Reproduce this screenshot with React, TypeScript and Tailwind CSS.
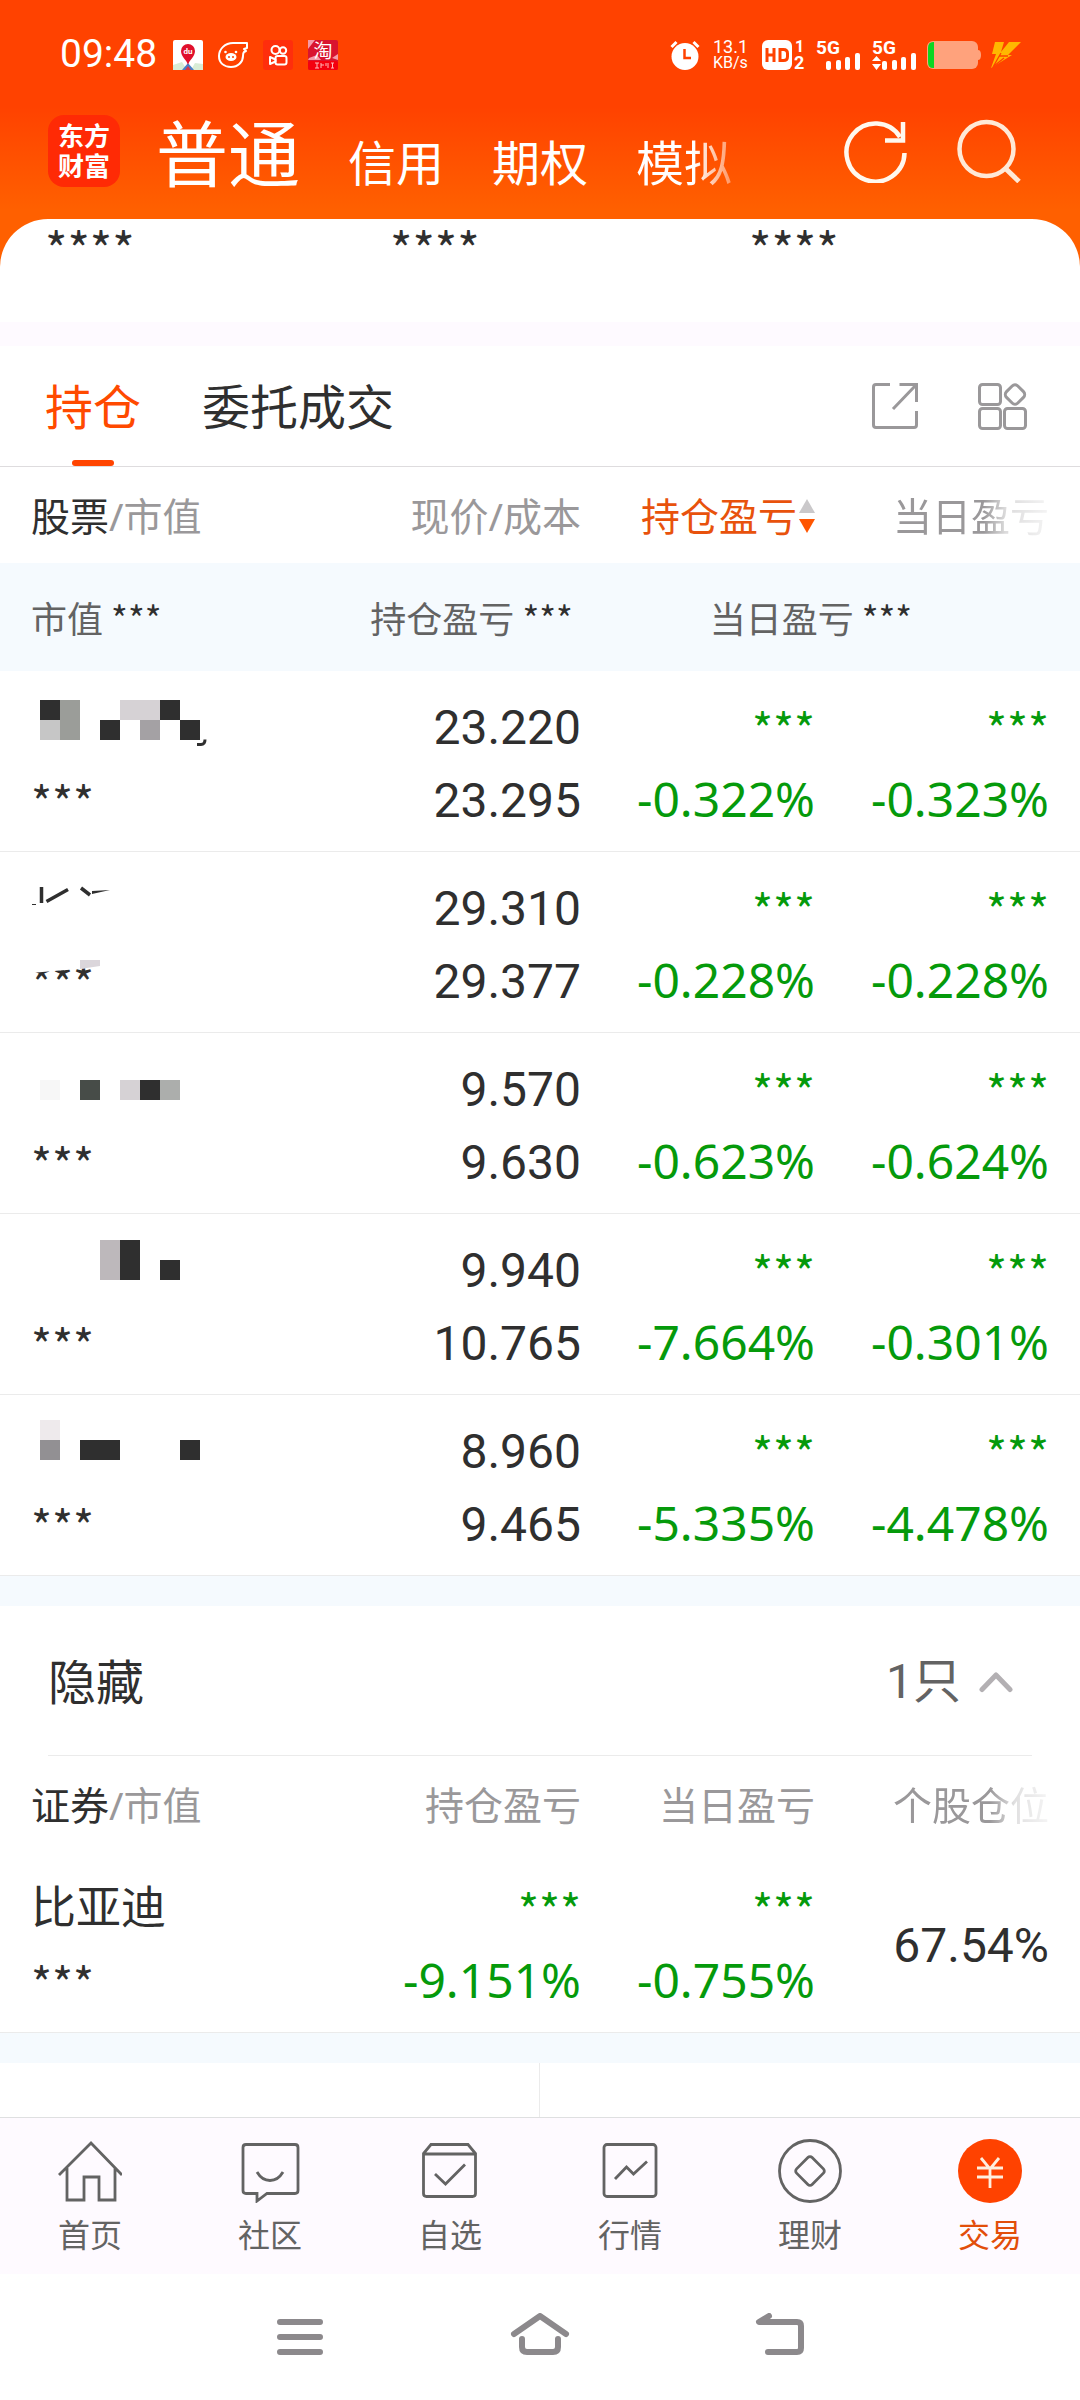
import type { ReactNode } from "react";

type Block = [x: number, y: number, w: number, h: number, fill: string];

type Holding = {
  id: string;
  blocks?: Block[];
  fragment?: ReactNode;
  veiled?: boolean;
  price: string;
  cost: string;
  total: string;
  day: string;
};

const INK = "#2f2f2f";

const holdings: Holding[] = [
  {
    id: "a",
    blocks: [
      [9, 11, 20, 20, INK],
      [9, 31, 20, 20, "#c6c6c6"],
      [29, 11, 20, 40, "#9b9d99"],
      [69, 31, 20, 20, INK],
      [89, 11, 40, 20, "#d6d2d5"],
      [109, 31, 20, 20, "#a4a1a4"],
      [129, 11, 20, 20, INK],
      [149, 31, 20, 20, INK],
    ],
    fragment: <path d="M166 55.5h4q4 0 4-5" fill="none" stroke={INK} strokeWidth="3" />,
    price: "23.220",
    cost: "23.295",
    total: "-0.322%",
    day: "-0.323%",
  },
  {
    id: "b",
    fragment: (
      <g fill="none" stroke={INK} strokeWidth="3.5">
        <path d="M10.500 17v16M15.500 31.500L37 19.500M50 18l9 7" />
        <path d="M61 21l18 -1l-18 4z" fill={INK} stroke="none" />
        <path d="M1 34.500h4" strokeWidth="1" />
      </g>
    ),
    veiled: true,
    price: "29.310",
    cost: "29.377",
    total: "-0.228%",
    day: "-0.228%",
  },
  {
    id: "c",
    blocks: [
      [9, 29, 20, 20, "#f7f7f7"],
      [49, 29, 20, 20, "#474c48"],
      [89, 29, 20, 20, "#d6d2d5"],
      [109, 29, 20, 20, INK],
      [129, 29, 20, 20, "#acaeac"],
    ],
    price: "9.570",
    cost: "9.630",
    total: "-0.623%",
    day: "-0.624%",
  },
  {
    id: "d",
    blocks: [
      [69, 8, 20, 40, "#bdb8bb"],
      [89, 8, 20, 40, INK],
      [129, 28, 20, 20, INK],
    ],
    price: "9.940",
    cost: "10.765",
    total: "-7.664%",
    day: "-0.301%",
  },
  {
    id: "e",
    blocks: [
      [9, 7, 20, 20, "#eeeaec"],
      [9, 27, 20, 20, "#929093"],
      [49, 27, 40, 20, INK],
      [149, 27, 20, 20, INK],
    ],
    price: "8.960",
    cost: "9.465",
    total: "-5.335%",
    day: "-4.478%",
  },
];

function Stars({ size = "md", className = "" }: { size?: "sm" | "md" | "lg"; className?: string }) {
  const text =
    size === "sm"
      ? "text-[36px] leading-none"
      : size === "md"
        ? "block text-[45px] leading-[73px]"
        : "text-[48px] leading-[56px]";
  return (
    <span className={`font-['Noto_Sans_CJK_SC',sans-serif] ${text} ${className}`}>
      {size === "lg" ? "****" : "***"}
    </span>
  );
}

function Percent({ children }: { children: ReactNode }) {
  return (
    <div>
      <span className="font-['Noto_Sans',sans-serif] leading-none">{children}</span>
    </div>
  );
}

function StatusBar() {
  return (
    <div className="flex h-[109px] items-center justify-between pr-[59px] pl-[60px] font-[Roboto,'Noto_Sans_CJK_SC',sans-serif] text-white">
      <div className="flex items-center gap-[15px]">
        <span className="w-[98px] text-[39px] leading-none">09:48</span>
        <svg width="30" height="30" viewBox="0 0 30 30" aria-hidden="true">
          <rect width="30" height="30" rx="2" fill="#fff" />
          <path d="M0 25l9-3 5 8H0zM30 24l-8-1-4 7h12z" fill="#d8ecd6" />
          <path d="M15 23l-6 7h12z" fill="#4a7fc8" />
          <path d="M15 26l-3 4h6z" fill="#d43a4a" />
          <path d="M15 25c-1-5-7-8-7-14a7 7 0 0 1 14 0c0 6-6 9-7 14z" fill="#e0102c" />
          <text x="15" y="14" fontSize="8" fontWeight="700" fill="#fff" textAnchor="middle">du</text>
        </svg>
        <svg width="30" height="30" viewBox="0 0 30 30" fill="none" stroke="#fff" strokeWidth="2" aria-hidden="true">
          <path d="M29 3H15C7 3 1 9 1 16c0 7 5 11 12 11s12-5 12-11c0-2 0-3 1-4l2-1-2-2 3-1z" strokeLinejoin="round" />
          <ellipse cx="13" cy="17" rx="5.500" ry="4" fill="#fff" stroke="none" />
          <circle cx="11" cy="17" r="1" fill="#ff4200" stroke="none" />
          <circle cx="15" cy="17" r="1" fill="#ff4200" stroke="none" />
          <circle cx="7.500" cy="12" r="1.300" fill="#fff" stroke="none" />
          <circle cx="18" cy="12" r="1.300" fill="#fff" stroke="none" />
        </svg>
        <svg width="30" height="30" viewBox="0 0 30 30" fill="none" stroke="#fff" strokeWidth="2" aria-hidden="true">
          <rect width="30" height="30" rx="3" fill="#ff2e0c" stroke="none" />
          <circle cx="12.500" cy="10" r="4" />
          <circle cx="20" cy="10.500" r="3.200" />
          <rect x="12.500" y="16" width="11" height="8.500" rx="2" />
          <path d="M12.500 19.500L7 17v7l5.500-2.500z" strokeLinejoin="round" />
        </svg>
        <svg width="30" height="30" viewBox="0 0 30 30" aria-hidden="true">
          <rect width="30" height="30" rx="2" fill="#d9142f" />
          <path d="M0 0h7L0 9zM30 14l-6 4 6 2zM1 18l8-3 4 5H0z" fill="#f59aa8" />
          <rect y="21" width="30" height="9" rx="2" fill="#f4000f" />
          <text x="15" y="18" fontSize="19" fill="#fff" textAnchor="middle">淘</text>
          <path d="M7 23h4M9 23v5M7 28h4M13 23v5M13 25h3M18 23v3M20 23v5M23 23h3M23 28h3M24.500 23v5" stroke="#fbb" strokeWidth="1" />
        </svg>
      </div>
      <div className="flex items-center">
        <svg width="30" height="30" viewBox="0 0 30 30" aria-hidden="true">
          <circle cx="15" cy="16.500" r="13.500" fill="#fff" />
          <path d="M1.500 7l5-5M28.500 7l-5-5" stroke="#fff" strokeWidth="3" />
          <path d="M14.500 9v9h6.500" fill="none" stroke="#ff4200" strokeWidth="2.500" />
        </svg>
        <div className="ml-[13px] w-[36px] text-[18px] leading-[16px]">
          <div>13.1</div>
          <div className="text-[16px]">KB/s</div>
        </div>
        <svg className="ml-[13px]" width="44" height="30" viewBox="0 0 44 30" fill="#fff" aria-hidden="true">
          <rect width="30" height="30" rx="6" />
          <path d="M5 8v14M12 8v14M5 15h7M18 9.500h3.500q4 0 4 4v3q0 4-4 4H18z" fill="none" stroke="#ff4200" strokeWidth="3" />
          <text x="33" y="12" fontSize="16" fontWeight="700">1</text>
          <text x="32" y="29" fontSize="18" fontWeight="700">2</text>
        </svg>
        <svg className="ml-[10px] overflow-visible" width="45" height="30" viewBox="0 0 45 30" fill="#fff" aria-hidden="true">
          <text x="0" y="14" fontSize="19" fontWeight="700">5G</text>
          <rect x="10" y="21" width="5" height="9" rx="2" />
          <rect x="20" y="20" width="5" height="10" rx="2" />
          <rect x="29" y="17" width="5" height="13" rx="2" />
          <rect x="39" y="13" width="5" height="17" rx="2" />
        </svg>
        <svg className="ml-[11px] overflow-visible" width="45" height="30" viewBox="0 0 45 30" fill="#fff" aria-hidden="true">
          <text x="0" y="14" fontSize="19" fontWeight="700">5G</text>
          <path d="M0 21l4.500-5L9 21zM0 24h9l-4.500 6z" />
          <rect x="10" y="21" width="5" height="9" rx="2" />
          <rect x="20" y="20" width="5" height="10" rx="2" />
          <rect x="29" y="17" width="5" height="13" rx="2" />
          <rect x="39" y="13" width="5" height="17" rx="2" />
        </svg>
        <svg className="ml-[10px]" width="54" height="28" viewBox="0 0 54 28" aria-hidden="true">
          <rect width="51" height="28" rx="6" fill="#ffa27c" />
          <path d="M50 9h1q3 0 3 5t-3 5h-1z" fill="#ffa27c" />
          <path d="M7 1h-1q-5 0-5 6v14q0 6 5 6h1z" fill="#0bd622" />
        </svg>
        <svg className="ml-[10px]" width="30" height="26" viewBox="0 0 30 26" aria-hidden="true">
          <path d="M4 0h9l-3 10L18 0h12L17 13h4L0 26l5-14H1z" fill="#ffb800" />
          <path d="M2 25L10 11M8 14h9M3 24l10-8" fill="none" stroke="#ff4200" strokeWidth="1.300" />
        </svg>
      </div>
    </div>
  );
}

function AppHeader() {
  return (
    <header className="flex h-[110px] items-start justify-between pr-[59px] pl-12 text-white">
      <div className="flex h-[84px] items-center">
        <div className="w-[72px] rounded-[16px] bg-[#ff2a05] py-[6px] text-center text-[26px] leading-[30px] font-bold">
          东方
          <br />
          财富
        </div>
        <nav className="ml-9 flex items-baseline gap-12 pt-1 text-[48px] leading-none">
          <button type="button" className="text-[72px] leading-none">普通</button>
          <button type="button">信用</button>
          <button type="button">期权</button>
          <button type="button" className="bg-linear-to-r from-white from-60% to-[#ff9460] bg-clip-text text-transparent">
            模拟
          </button>
        </nav>
      </div>
      <div className="flex h-[84px] items-center gap-[49px]">
        <button type="button" aria-label="刷新">
          <svg width="64" height="64" viewBox="0 0 64 64" fill="none" stroke="#fff8ee" strokeWidth="4.500">
            <path d="M60.500 34A29 29 0 1 1 56 18" />
            <path d="M59 3v18.500H41" />
          </svg>
        </button>
        <button type="button" aria-label="搜索">
          <svg width="64" height="64" viewBox="0 0 64 64" fill="none" stroke="#ffe9d6" strokeWidth="4.500">
            <circle cx="29.500" cy="30" r="27" />
            <path d="M48 49l14 13.500" strokeWidth="5" />
          </svg>
        </button>
      </div>
    </header>
  );
}

function SectionTabs() {
  return (
    <div className="flex h-[121px] items-stretch justify-between border-b border-[#dedcde] pr-[52px] pl-[45px]">
      <div className="flex gap-[61px] text-[48px] leading-none">
        <button type="button" className="relative pt-[2px] text-[#ff4a00]">
          持仓
          <span className="absolute bottom-0 left-1/2 h-[6px] w-[42px] -translate-x-1/2 rounded-full bg-[#ff4400]" />
        </button>
        <button type="button" className="pt-[2px] text-[#2f2f2f]">委托成交</button>
      </div>
      <div className="flex items-center gap-[58px]">
        <button type="button" aria-label="分享">
          <svg width="48" height="48" viewBox="0 0 48 48" fill="none" stroke="#9a989a" strokeWidth="3">
            <path d="M19 2.500H5q-2.500 0-2.500 2.500v38q0 2.500 2.500 2.500h38q2.500 0 2.500-2.500V29" />
            <path d="M28.500 2.500h17V20M45 3L22 27" />
          </svg>
        </button>
        <button type="button" aria-label="功能">
          <svg width="51" height="48" viewBox="0 0 51 48" fill="none" stroke="#9a989a" strokeWidth="3">
            <rect x="2.500" y="2.500" width="21" height="20" rx="3" />
            <rect x="2.500" y="26.500" width="21" height="20" rx="3" />
            <rect x="27.500" y="26.500" width="21" height="20" rx="3" />
            <rect x="30" y="4.500" width="16" height="16" rx="4" transform="rotate(45 38 12.500)" />
          </svg>
        </button>
      </div>
    </div>
  );
}

function Columns() {
  return (
    <colgroup>
      <col />
      <col className="w-[232px]" />
      <col className="w-[234px]" />
      <col className="w-[265px]" />
    </colgroup>
  );
}

const fadeHalf = "inline-block [mask-image:linear-gradient(to_right,black_58%,rgba(0,0,0,0.35)_72%,rgba(0,0,0,0.1))]";
const fadeLate = "inline-block [mask-image:linear-gradient(to_right,black_62%,rgba(0,0,0,0.3)_78%,rgba(0,0,0,0.1))]";

function HoldingsTable() {
  return (
    <table className="w-full table-fixed border-separate border-spacing-0 text-right text-[#2f2f2f]">
      <Columns />
      <thead className="text-[39px] leading-[94px] text-[#9a989a]">
        <tr>
          <th scope="col" className="pt-[2px] pl-[31px] text-left font-normal">
            <span className="text-[#2f2f2f]">股票</span>/市值
          </th>
          <th scope="col" className="pt-[2px] font-normal whitespace-nowrap">现价/成本</th>
          <th scope="col" className="pt-[2px] font-normal" aria-sort="descending">
            <button type="button" className="inline-flex items-center gap-[2px] text-[#e8520c]">
              持仓盈亏
              <svg width="16" height="36" viewBox="0 0 16 36" aria-hidden="true">
                <path d="M8 1l8 14H0z" fill="#cac8ca" />
                <path d="M0 21h16L8 35z" fill="#ff5500" />
              </svg>
            </button>
          </th>
          <th scope="col" className="pt-[2px] pr-[31px] font-normal">
            <span className={fadeHalf}>当日盈亏</span>
          </th>
        </tr>
      </thead>
      <tbody className="font-[Roboto,'Noto_Sans_CJK_SC',sans-serif] text-[48px] leading-[73px]">
        <tr>
          <td colSpan={4} className="bg-[#f5fafe] px-[31px]">
            <div className="grid grid-cols-3 text-left font-['Noto_Sans_CJK_SC',sans-serif] text-[36px] leading-[108px] text-[#636363]">
              <span>市值 <Stars size="sm" className="text-[#2f2f2f]" /></span>
              <span>持仓盈亏 <Stars size="sm" className="text-[#2f2f2f]" /></span>
              <span>当日盈亏 <Stars size="sm" className="text-[#2f2f2f]" /></span>
            </div>
          </td>
        </tr>
        {holdings.map((h) => (
          <tr key={h.id}>
            <td className="border-b border-[#ebebeb] pt-5 pb-[14px] pl-[31px] text-left">
              <svg className="block" width="180" height="73" viewBox="0 2 180 73" aria-hidden="true">
                {h.blocks?.map(([x, y, w, hh, fill]) => (
                  <rect key={`${x}-${y}`} x={x} y={y} width={w} height={hh} fill={fill} />
                ))}
                {h.fragment}
              </svg>
              <div className="relative">
                <Stars />
                {h.veiled && (
                  <svg className="absolute top-0 left-0" width="80" height="73" viewBox="0 2 80 73" aria-hidden="true">
                    <path d="M0 10h80v13L0 30z" fill="#fff" />
                    <path d="M49 17h20v6l-20 3z" fill="#dbd6db" />
                  </svg>
                )}
              </div>
            </td>
            <td className="border-b border-[#ebebeb] pt-5 pb-[14px]">
              <div>{h.price}</div>
              <div>{h.cost}</div>
            </td>
            <td className="border-b border-[#ebebeb] pt-5 pb-[14px] text-[#059a0b]">
              <Stars />
              <Percent>{h.total}</Percent>
            </td>
            <td className="border-b border-[#ebebeb] pt-5 pr-[31px] pb-[14px] text-[#059a0b]">
              <Stars />
              <Percent>{h.day}</Percent>
            </td>
          </tr>
        ))}
      </tbody>
    </table>
  );
}

function HiddenHoldings() {
  return (
    <section>
      <button
        type="button"
        aria-expanded="true"
        className="mx-12 flex h-[150px] w-[calc(100%-96px)] items-center border-b border-[#ebebeb] pt-[2px] text-[48px] text-[#2f2f2f]"
      >
        隐藏
        <span className="ml-auto font-[Roboto,'Noto_Sans_CJK_SC',sans-serif] text-[#636363]">1只</span>
        <svg className="mr-[19px] ml-[18px]" width="34" height="22" viewBox="0 0 34 22" fill="none" stroke="#b3b0b3" strokeWidth="5" strokeLinecap="round" strokeLinejoin="round" aria-hidden="true">
          <path d="M3 18.500L17 4l14 14.500" />
        </svg>
      </button>
      <table className="w-full table-fixed border-separate border-spacing-0 text-right text-[#2f2f2f]">
        <Columns />
        <thead className="text-[39px] leading-[94px] text-[#9a989a]">
          <tr>
            <th scope="col" className="pt-[2px] pl-[31px] text-left font-normal">
              <span className="text-[#2f2f2f]">证券</span>/市值
            </th>
            <th scope="col" className="pt-[2px] font-normal">持仓盈亏</th>
            <th scope="col" className="pt-[2px] font-normal">当日盈亏</th>
            <th scope="col" className="pt-[2px] pr-[31px] font-normal">
              <span className={fadeLate}>个股仓位</span>
            </th>
          </tr>
        </thead>
        <tbody className="font-[Roboto,'Noto_Sans_CJK_SC',sans-serif] text-[48px] leading-[73px]">
          <tr>
            <td className="border-b border-[#ebebeb] pt-5 pb-[14px] pl-[31px] text-left">
              <div className="text-[45px]">比亚迪</div>
              <Stars />
            </td>
            <td className="border-b border-[#ebebeb] pt-5 pb-[14px] text-[#059a0b]">
              <Stars />
              <Percent>-9.151%</Percent>
            </td>
            <td className="border-b border-[#ebebeb] pt-5 pb-[14px] text-[#059a0b]">
              <Stars />
              <Percent>-0.755%</Percent>
            </td>
            <td className="border-b border-[#ebebeb] pt-5 pr-[31px] pb-[14px]">67.54%</td>
          </tr>
        </tbody>
      </table>
    </section>
  );
}

const tabs: { label: string; active?: boolean; icon: ReactNode }[] = [
  {
    label: "首页",
    icon: <path d="M1 36L33 4l31 32M9 29v32h17V38h15v23h16V29" />,
  },
  {
    label: "社区",
    icon: <path d="M8 5.500h49q3 0 3 3v43q0 3-3 3H29l-10 7.500v-7.500H8q-3 0-3-3v-43q0-3 3-3zM19 33q5 8.500 13 8.500t13-8.500" />,
  },
  {
    label: "自选",
    icon: <path d="M5.500 14.500v40q0 3 3 3h46q3 0 3-3v-40L50 5.500H13zM5.500 15h52M17 35l10.500 10L47 25.500" />,
  },
  {
    label: "行情",
    icon: (
      <>
        <rect x="6" y="5.500" width="52" height="52" rx="3" />
        <path d="M17 40l11.500-12 7 7L49 22.500" />
      </>
    ),
  },
  {
    label: "理财",
    icon: (
      <>
        <circle cx="32" cy="32" r="30.500" />
        <rect x="21" y="21" width="22" height="22" rx="3" transform="rotate(45 32 32)" />
      </>
    ),
  },
  {
    label: "交易",
    active: true,
    icon: (
      <>
        <circle cx="32" cy="32" r="32" fill="#ff4200" stroke="none" />
        <path d="M23 19l9 11 9-11M32 29v20M19 29h26M19 38h26" stroke="#ffeedd" />
      </>
    ),
  },
];

function BottomTabs() {
  return (
    <nav className="grid h-[157px] grid-cols-6 border-t border-[#dfe0e1] bg-[#fefaff]">
      {tabs.map((t) => (
        <a
          key={t.label}
          href={`#${t.label}`}
          aria-current={t.active ? "page" : undefined}
          className={`flex flex-col items-center pt-[21px] text-[32px] leading-[36px] ${t.active ? "text-[#e24e0a]" : "text-[#636363]"}`}
        >
          <svg width="64" height="64" viewBox="0 0 64 64" fill="none" stroke="#636363" strokeWidth="2.800" aria-hidden="true">
            {t.icon}
          </svg>
          <span className="mt-[14px]">{t.label}</span>
        </a>
      ))}
    </nav>
  );
}

function SystemNav() {
  return (
    <nav className="flex h-[126px] items-center justify-center gap-[180px] bg-white">
      <button type="button" aria-label="最近任务">
        <svg width="60" height="48" viewBox="0 0 60 48" fill="none" stroke="#8c898c" strokeWidth="6" strokeLinecap="round">
          <path d="M10 9h40M10 24h40M10 39h40" />
        </svg>
      </button>
      <button type="button" aria-label="主屏幕">
        <svg width="60" height="48" viewBox="0 0 60 48" fill="none" stroke="#8c898c" strokeWidth="6" strokeLinecap="round" strokeLinejoin="round">
          <path d="M4 21L30 3l26 18M12 26v8q0 5 5 5h26q5 0 5-5v-8" />
        </svg>
      </button>
      <button type="button" aria-label="返回">
        <svg width="60" height="48" viewBox="0 0 60 48" fill="none" stroke="#8c898c" strokeWidth="6" strokeLinecap="round" strokeLinejoin="round">
          <path d="M19 3L9 9h38q4 0 4 4v22q0 4-4 4H18" />
        </svg>
      </button>
    </nav>
  );
}

export default function App() {
  return (
    <div className="min-h-screen bg-[linear-gradient(#ff4200_107px,#ff6000_210px)] font-['Noto_Sans','Noto_Sans_CJK_SC',sans-serif]">
      <StatusBar />
      <AppHeader />
      <main className="overflow-hidden rounded-t-[48px] bg-white">
        <div className="grid h-[103px] grid-cols-[345fr_359fr_331fr] pl-[45px] text-[#2f2f2f]">
          <Stars size="lg" />
          <Stars size="lg" />
          <Stars size="lg" />
        </div>
        <div className="h-6 bg-[#fefaff]" />
        <SectionTabs />
        <HoldingsTable />
        <div className="h-[30px] bg-[#f5fafe]" />
        <HiddenHoldings />
        <div className="h-[30px] bg-[#f5fafe]" />
        <div className="grid h-[54px] grid-cols-2">
          <div className="border-r border-[#ebebeb]" />
          <div />
        </div>
      </main>
      <BottomTabs />
      <SystemNav />
    </div>
  );
}
